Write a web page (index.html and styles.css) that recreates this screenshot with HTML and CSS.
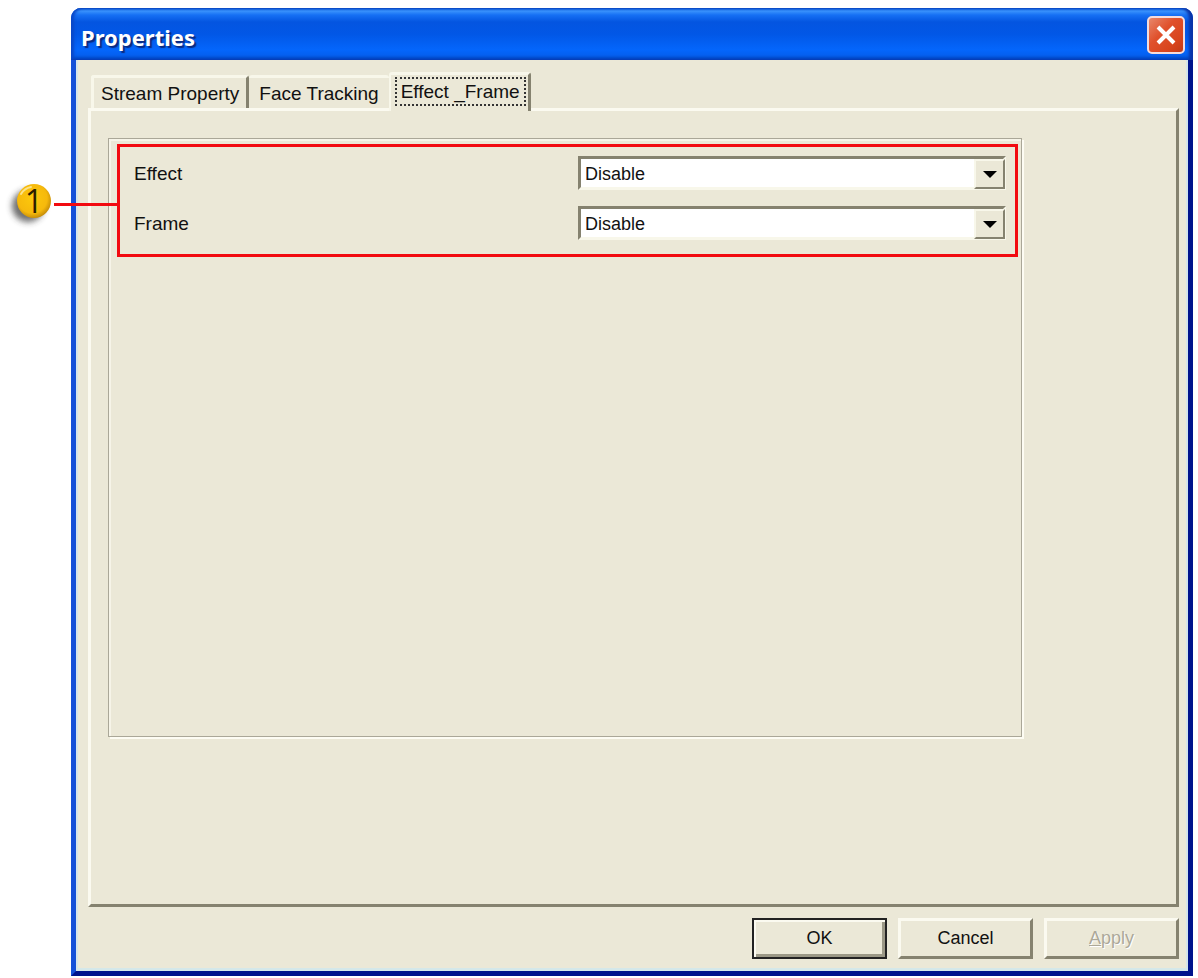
FILE: index.html
```html
<!DOCTYPE html>
<html lang="en">
<head>
  <meta charset="UTF-8">
  <meta name="viewport" content="width=device-width, initial-scale=1.0">
  <title>Properties</title>
  <link rel="stylesheet" href="styles.css">
</head>
<body>

  <main class="window">
    <header class="title-bar">
      <h1>Properties</h1>
      <button type="button" class="close-btn" aria-label="Close">
        <svg viewBox="0 0 24 24" width="24" height="24" aria-hidden="true">
          <path d="M4 4 L20 20 M20 4 L4 20" stroke="#fff" stroke-width="4"/>
        </svg>
      </button>
    </header>

    <form class="window-body">
      <div class="tabs" role="tablist">
        <button type="button" class="tab first" role="tab">Stream Property</button>
        <button type="button" class="tab" role="tab">Face Tracking</button>
        <button type="button" class="tab active" role="tab" aria-selected="true"><span>Effect _Frame</span></button>
      </div>

      <section class="panel" role="tabpanel">
        <div class="group">
          <div class="highlight">
            <div class="field">
              <label for="effect">Effect</label>
              <div class="combo">
                <select id="effect" name="effect">
                  <option>Disable</option>
                </select>
                <span class="arrow"></span>
              </div>
            </div>
            <div class="field">
              <label for="frame">Frame</label>
              <div class="combo">
                <select id="frame" name="frame">
                  <option>Disable</option>
                </select>
                <span class="arrow"></span>
              </div>
            </div>

            <!-- Numbered marker with its leader line -->
            <div class="callout">
              <svg class="badge" viewBox="0 0 50 50" width="50" height="50">
                <defs>
                  <radialGradient id="gold" cx="45%" cy="42%" r="58%">
                    <stop offset="0" stop-color="#fcc80c"/>
                    <stop offset="0.75" stop-color="#f6b90c"/>
                    <stop offset="1" stop-color="#c88f08"/>
                  </radialGradient>
                  <filter id="soft" x="-30%" y="-30%" width="160%" height="160%">
                    <feGaussianBlur stdDeviation="3"/>
                  </filter>
                </defs>
                <circle cx="24" cy="27" r="16" fill="#333" opacity="0.7" filter="url(#soft)"/>
                <circle cx="30" cy="22" r="17" fill="url(#gold)"/>
                <path d="M17 15 A15 15 0 0 1 27 8" fill="none" stroke="#fbe28a" stroke-width="2" stroke-linecap="round"/>
                <text x="30" y="34" class="badge-text">1</text>
              </svg>
              <span class="line"></span>
            </div>
          </div>
        </div>
      </section>

      <footer class="actions">
        <button type="submit" class="btn default">OK</button>
        <button type="button" class="btn">Cancel</button>
        <button type="button" class="btn" disabled><u>A</u>pply</button>
      </footer>
    </form>
  </main>

</body>
</html>
```
FILE: styles.css
```css
* {
  box-sizing: border-box;
}

body {
  margin: 0;
  padding: 8px 5px 2px 71px;
  min-height: 100vh;
  display: flex;
  background-color: #ffffff;
  font-family: "Liberation Sans", Arial, sans-serif;
  font-size: 18px;
  color: #111;
}

button,
select {
  font: inherit;
  color: inherit;
}

.window {
  flex: 1;
  display: flex;
  flex-direction: column;
  border: 5px solid;
  border-color: #0a5ae8 #00138c #00138c #1450d8;
  border-top: none;
  border-radius: 10px 10px 0 0;
  background-color: #ebe8d7;
}

/* Title bar */
.title-bar {
  display: flex;
  justify-content: space-between;
  align-items: center;
  height: 52px;
  margin: 0 -5px;
  padding: 2px 8px 0 10px;
  border-radius: 10px 10px 0 0;
  background: linear-gradient(#0a5fe0 0, #3a92fc 3px, #1670f4 7px, #0455e0 14px, #0257e6 26px, #0466fc 42px, #0460f0 47px, #0142bc 52px);
  box-shadow: inset -4px 0 3px #0a34a8, inset 3px 0 3px #0a48c8;
}

.title-bar h1 {
  margin: 0;
  padding-top: 4px;
  font-family: "Noto Sans", sans-serif;
  font-size: 22px;
  font-weight: bold;
  line-height: 28px;
  color: #fff;
  text-shadow: 2px 2px 1px #0a2a80;
}

.close-btn {
  display: flex;
  align-items: center;
  justify-content: center;
  width: 38px;
  height: 38px;
  padding: 0;
  border: 2px solid #f4dcdc;
  border-radius: 5px;
  background: linear-gradient(135deg, #e8886c, #e0512c 40%, #d8441c 75%, #c03a18);
}

/* Tabs */
.window-body {
  flex: 1;
  display: flex;
  flex-direction: column;
  padding: 12px 9px 12px 12px;
  box-shadow: inset 2px 0 0 #d4e4ea, inset -2px 0 0 #d4e4ea, inset 0 -3px 0 #d4e8ea;
}

.tabs {
  display: flex;
  align-items: flex-end;
  padding-left: 3px;
  font-size: 19px;
}

.tab {
  height: 33px;
  padding: 2px 7px 0;
  border: none;
  border-top: 3px solid #f8f7ea;
  border-right: 3px solid #85826f;
  border-radius: 3px 3px 0 0;
  background-color: #ebe8d7;
}

.tab.first {
  border-left: 3px solid #f8f7ea;
}

.tab:nth-child(2) {
  padding: 2px 10px 0;
  border-right: none;
}

.tab.active {
  position: relative;
  height: 39px;
  margin-bottom: -3px;
  padding: 0 2px 3px 4px;
  border-left: 2px solid #f8f7ea;
}

.tab.active span {
  display: block;
  padding: 0 4px;
  border: 2px dotted #333;
  line-height: 25px;
}

/* Tab page */
.panel {
  flex: 1;
  display: flex;
  padding: 27px 154px 167px 17px;
  border: 3px solid;
  border-color: #fbfaf0 #85826f #85826f #fbfaf0;
}

.group {
  flex: 1;
  padding: 5px 3px 5px 8px;
  border: 1px solid #aaa798;
  box-shadow: 2px 2px 0 #fdfcf3, inset 2px 2px 0 #f6f4e8;
}

.highlight {
  position: relative;
  display: flex;
  flex-direction: column;
  gap: 16px;
  padding: 9px 9px 14px 14px;
  border: 3px solid #f20a10;
}

.field {
  display: grid;
  grid-template-columns: 1fr 428px;
  align-items: center;
}

.field label {
  padding-top: 2px;
  font-size: 19px;
}

.combo {
  position: relative;
}

.combo select {
  display: block;
  width: 100%;
  height: 34px;
  padding: 2px 36px 0 4px;
  border: 3px solid;
  border-color: #85826f #f8f7ea #f8f7ea #85826f;
  border-radius: 0;
  background-color: #fff;
  appearance: none;
}

.arrow {
  position: absolute;
  top: 3px;
  right: 1px;
  bottom: 1px;
  width: 31px;
  display: flex;
  align-items: center;
  justify-content: center;
  border: 2px solid;
  border-color: #f8f7ea #85826f #85826f #f8f7ea;
  background-color: #ebe8d7;
  pointer-events: none;
}

.arrow::before {
  content: "";
  border: 7px solid transparent;
  border-top-color: #000;
  border-bottom: none;
}

/* Marker */
.callout {
  position: absolute;
  right: 100%;
  top: 50%;
  display: flex;
  width: 116px;
  margin-top: -22px;
}

.badge {
  flex: none;
}

.badge-text {
  font-family: "Open Sans", sans-serif;
  font-size: 32px;
  text-anchor: middle;
  fill: #2a1c00;
}

.line {
  flex: 1;
  height: 3px;
  margin-top: 24px;
  background-color: #f20a10;
}

/* Buttons */
.actions {
  display: flex;
  justify-content: flex-end;
  gap: 11px;
  padding-top: 11px;
}

.btn {
  width: 135px;
  height: 41px;
  padding: 0;
  border: 3px solid;
  border-color: #fbfaf0 #85826f #85826f #fbfaf0;
  background-color: #ebe8d7;
}

.btn.default {
  border: 2px solid #222;
  box-shadow: inset 2px 2px 0 #fbfaf0, inset -3px -3px 0 #9b9886;
}

.btn:disabled {
  color: #aca899;
  text-shadow: 1px 1px 0 #fff;
}
```
